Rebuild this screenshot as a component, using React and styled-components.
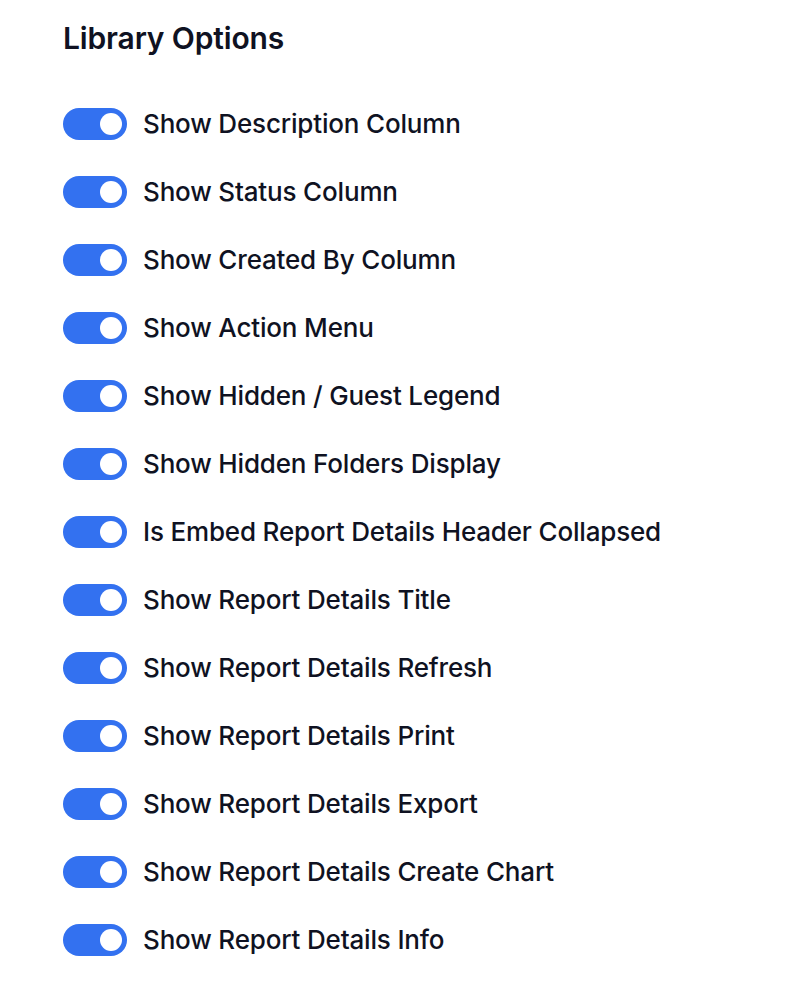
import styled, { createGlobalStyle } from 'styled-components';

const GlobalStyle = createGlobalStyle`
	body {
		margin: 0;
		background: #fff;
		font-family: Inter, 'Noto Sans', sans-serif;
		color: #0f1222;
	}
`;

const Panel = styled.div`
	padding: 18px 0 0 63px;
	h2 {
		margin: 0 0 50px;
		font-size: 30px;
		line-height: 40px;
		font-weight: 600;
		letter-spacing: -0.15px;
	}
`;

const List = styled.div`
	display: flex;
	flex-direction: column;
	gap: 36px;
`;

const Row = styled.label`
	display: flex;
	align-items: center;
	gap: 16px;
	font-size: 26px;
	font-weight: 500;
	line-height: 32px;
	letter-spacing: -0.17px;
	cursor: pointer;
`;

const Switch = styled.span`
	position: relative;
	flex: none;
	width: 64px;
	height: 32px;
	border-radius: 16px;
	background: ${(p) => (p.$on ? '#3371f0' : '#cbd2dc')};
	&::after {
		content: '';
		position: absolute;
		top: 5px;
		left: ${(p) => (p.$on ? '37px' : '5px')};
		width: 22px;
		height: 22px;
		border-radius: 50%;
		background: #fff;
	}
`;

const options = [
	'Show Description Column',
	'Show Status Column',
	'Show Created By Column',
	'Show Action Menu',
	'Show Hidden / Guest Legend',
	'Show Hidden Folders Display',
	'Is Embed Report Details Header Collapsed',
	'Show Report Details Title',
	'Show Report Details Refresh',
	'Show Report Details Print',
	'Show Report Details Export',
	'Show Report Details Create Chart',
	'Show Report Details Info',
];

const App = () => {
	return (
		<>
			<GlobalStyle />
			<Panel>
				<h2>Library Options</h2>
				<List>
					{options.map((label) => (
						<Row key={label}>
							<Switch $on />
							{label}
						</Row>
					))}
				</List>
			</Panel>
		</>
	);
};

export default App;
